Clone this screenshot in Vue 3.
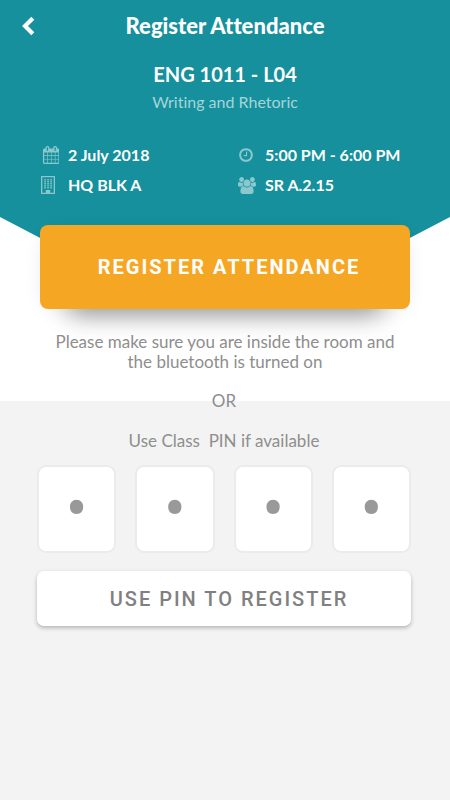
<script setup>
import { ref } from 'vue'

const pin = ref(['', '', '', ''])
const windows = [4, 7, 10].flatMap((x) => [3, 5, 7, 9, 11].map((y) => ({ x, y })))
</script>

<template>
  <main class="screen">
    <header class="hero">
      <nav class="bar">
        <button class="back" type="button" aria-label="Back">
          <svg viewBox="0 0 14 20" width="14" height="20" aria-hidden="true">
            <path d="M11.800 2.200 4 10l7.800 7.800" fill="none" stroke="currentColor" stroke-width="4.200" />
          </svg>
        </button>
        <h1 class="title">Register Attendance</h1>
      </nav>
      <h2 class="course">ENG 1011 - L04</h2>
      <p class="subject">Writing and Rhetoric</p>
      <ul class="facts">
        <li class="fact">
          <svg class="icon" viewBox="-128 0 1792 1792" width="18" height="18" aria-hidden="true">
            <path d="M192 1664h288v-288h-288v288zm352 0h320v-288h-320v288zm-352-352h288v-320h-288v320zm352 0h320v-320h-320v320zm-352-384h288v-288h-288v288zm736 736h320v-288h-320v288zm-384-736h320v-288h-320v288zm768 736h288v-288h-288v288zm-384-352h320v-320h-320v320zm-352-864v-288q0-13-9.500-22.500t-22.500-9.500h-64q-13 0-22.500 9.500t-9.500 22.500v288q0 13 9.500 22.500t22.500 9.500h64q13 0 22.500-9.500t9.500-22.500zm736 864h288v-320h-288v320zm-384-384h320v-288h-320v288zm384 0h288v-288h-288v288zm32-480v-288q0-13-9.500-22.500t-22.500-9.500h-64q-13 0-22.500 9.500t-9.500 22.500v288q0 13 9.500 22.500t22.500 9.500h64q13 0 22.500-9.500t9.500-22.500zm384-64v1280q0 52-38 90t-90 38h-1408q-52 0-90-38t-38-90v-1280q0-52 38-90t90-38h128v-96q0-66 47-113t113-47h64q66 0 113 47t47 113v96h384v-96q0-66 47-113t113-47h64q66 0 113 47t47 113v96h128q52 0 90 38t38 90z" />
          </svg>
          <span>2 July 2018</span>
        </li>
        <li class="fact">
          <svg class="icon" viewBox="0 0 1792 1792" width="16" height="16" aria-hidden="true">
            <path d="M1024 544v448q0 14-9 23t-23 9h-320q-14 0-23-9t-9-23v-64q0-14 9-23t23-9h224v-352q0-14 9-23t23-9h64q14 0 23 9t9 23zm416 352q0-148-73-273t-198-198-273-73-273 73-198 198-73 273 73 273 198 198 273 73 273-73 198-198 73-273zm224 0q0 209-103 385.5t-279.5 279.5-385.5 103-385.5-103-279.5-279.5-103-385.5 103-385.5 279.5-279.5 385.5-103 385.5 103 279.5 279.5 103 385.5z" />
          </svg>
          <span>5:00 PM - 6:00 PM</span>
        </li>
        <li class="fact">
          <svg class="icon" viewBox="0 0 14 18" width="14" height="18" aria-hidden="true">
            <path fill-rule="evenodd" d="M.6 0h12.8q.6 0 .6.6v16.8q0 .6-.6.6H.6q-.6 0-.6-.6V.6Q0 0 .6 0zM1.3 1.3v15.400h3.500V14h4.400v2.700h3.500V1.300z" />
            <rect v-for="w in windows" :key="`${w.x}-${w.y}`" :x="w.x - 0.7" :y="w.y" width="1.5" height="1.5" />
          </svg>
          <span>HQ BLK A</span>
        </li>
        <li class="fact">
          <svg class="icon" viewBox="0 0 1920 1792" width="18" height="17" aria-hidden="true">
            <path d="M593 896q-162 5-265 128h-134q-82 0-138-40.5t-56-118.5q0-353 124-353 6 0 43.5 21t97.5 42.5 119 21.5q67 0 133-23-5 37-5 66 0 139 81 256zm1071 637q0 120-73 189.5t-194 69.5h-874q-121 0-194-69.5t-73-189.5q0-53 3.5-103.5t14-109 26.5-108.5 43-97.5 62-81 85.5-53.5 111.5-20q10 0 43 21.5t73 48 107 48 135 21.5 135-21.5 107-48 73-48 43-21.5q61 0 111.5 20t85.5 53.5 62 81 43 97.5 26.5 108.5 14 109 3.5 103.5zm-1024-1277q0 106-75 181t-181 75-181-75-75-181 75-181 181-75 181 75 75 181zm704 384q0 159-112.5 271.5t-271.5 112.5-271.5-112.5-112.5-271.5 112.5-271.5 271.5-112.5 271.5 112.5 112.5 271.5zm576 225q0 78-56 118.5t-138 40.5h-134q-103-123-265-128 81-117 81-256 0-29-5-66 66 23 133 23 59 0 119-21.5t97.5-42.5 43.5-21q124 0 124 353zm-128-609q0 106-75 181t-181 75-181-75-75-181 75-181 181-75 181 75 75 181z" />
          </svg>
          <span>SR A.2.15</span>
        </li>
      </ul>
    </header>

    <section class="auto">
      <button class="register" type="button">REGISTER ATTENDANCE</button>
      <p class="note">Please make sure you are inside the room and<br />the bluetooth is turned on</p>
    </section>

    <form class="manual" @submit.prevent>
      <p class="or">OR</p>
      <fieldset class="pins">
        <legend class="legend">Use Class&nbsp; PIN if available</legend>
        <div class="boxes">
          <input
            v-for="(_, i) in pin"
            :key="i"
            v-model="pin[i]"
            class="digit"
            type="text"
            inputmode="numeric"
            maxlength="1"
            placeholder="•"
            :aria-label="`PIN digit ${i + 1}`"
          />
        </div>
      </fieldset>
      <button class="use-pin" type="submit">USE PIN TO REGISTER</button>
    </form>
  </main>
</template>

<style>
body {
  margin: 0;
  background: #f3f3f3;
}
</style>

<style scoped>
.screen {
  display: flex;
  flex-direction: column;
  min-height: 100vh;
  background: #fff;
  font-family: Lato, "Liberation Sans", sans-serif;
  font-variant-ligatures: none;
  color: #8e8e8e;
}
.screen * {
  box-sizing: border-box;
}
h1, h2, p, ul {
  margin: 0;
  padding: 0;
}
button {
  border: 0;
  cursor: pointer;
}
.hero {
  padding: 12px 21px 67px;
  background: #15909c;
  color: #fff;
  clip-path: polygon(0 0, 100% 0, 100% calc(100% - 47px), 80% 100%, 20% 100%, 0 calc(100% - 47px));
}
.bar {
  display: grid;
  grid-template-columns: 20px 1fr 20px;
  align-items: center;
  height: 28px;
}
.back {
  display: flex;
  padding: 0;
  background: none;
  color: #fff;
}
.title {
  font-size: 22px;
  line-height: 28px;
  font-weight: 900;
  text-align: center;
}
.course {
  margin-top: 20px;
  font-size: 20px;
  line-height: 28px;
  font-weight: 700;
  text-align: center;
}
.subject {
  margin-top: 4px;
  font-size: 16px;
  line-height: 20px;
  text-align: center;
  color: #a5d5da;
}
.facts {
  display: grid;
  grid-template-columns: 197fr 173fr;
  row-gap: 6px;
  margin-top: 31px;
  padding: 0 18px 0 20px;
  list-style: none;
}
.fact {
  display: grid;
  grid-template-columns: 19px 1fr;
  column-gap: 8px;
  align-items: center;
  font-size: 16px;
  line-height: 24px;
  font-weight: 700;
}
.icon {
  justify-self: start;
  fill: #8ac8ce;
}
.auto {
  display: flex;
  flex-direction: column;
  margin-top: -39px;
  padding: 0 40px 29px;
}
.register {
  position: relative;
  height: 84px;
  padding: 0 0 0 8px;
  border-radius: 8px;
  background: #f5a623;
  box-shadow: 0 36px 24px -30px rgba(0, 0, 0, 0.4), 0 4px 24px -10px rgba(0, 0, 0, 0.2);
  color: #fff;
  font-family: Roboto, "Liberation Sans", sans-serif;
  font-size: 20px;
  font-weight: 700;
  letter-spacing: 2px;
}
.note {
  margin-top: 23px;
  font-size: 17px;
  line-height: 20px;
  text-align: center;
}
.manual {
  display: flex;
  flex: 1;
  flex-direction: column;
  padding: 0 39px 40px 37px;
  background: #f3f3f3;
}
.or {
  margin-top: -10px;
  font-size: 17px;
  line-height: 20px;
  text-align: center;
}
.pins {
  min-width: 0;
  margin: 20px 0 0;
  padding: 0;
  border: 0;
}
.legend {
  width: 100%;
  padding: 0;
  font-size: 17px;
  line-height: 20px;
  text-align: center;
}
.boxes {
  display: grid;
  grid-template-columns: repeat(4, 1fr);
  gap: 19px;
  margin-top: 14px;
}
.digit {
  width: 100%;
  min-width: 0;
  height: 88px;
  padding: 0;
  border: 2px solid #ebebeb;
  border-radius: 9px;
  background: #fff;
  color: #999;
  font-family: Roboto, "Liberation Sans", sans-serif;
  font-size: 66px;
  text-align: center;
}
.digit::placeholder {
  color: #999;
  opacity: 1;
}
.use-pin {
  height: 55px;
  margin-top: 18px;
  padding: 0 0 0 10px;
  border-radius: 7px;
  background: #fff;
  box-shadow: 0 2px 4px rgba(0, 0, 0, 0.26);
  color: #808080;
  font-family: Roboto, "Liberation Sans", sans-serif;
  font-size: 20px;
  font-weight: 500;
  letter-spacing: 2px;
}
</style>
